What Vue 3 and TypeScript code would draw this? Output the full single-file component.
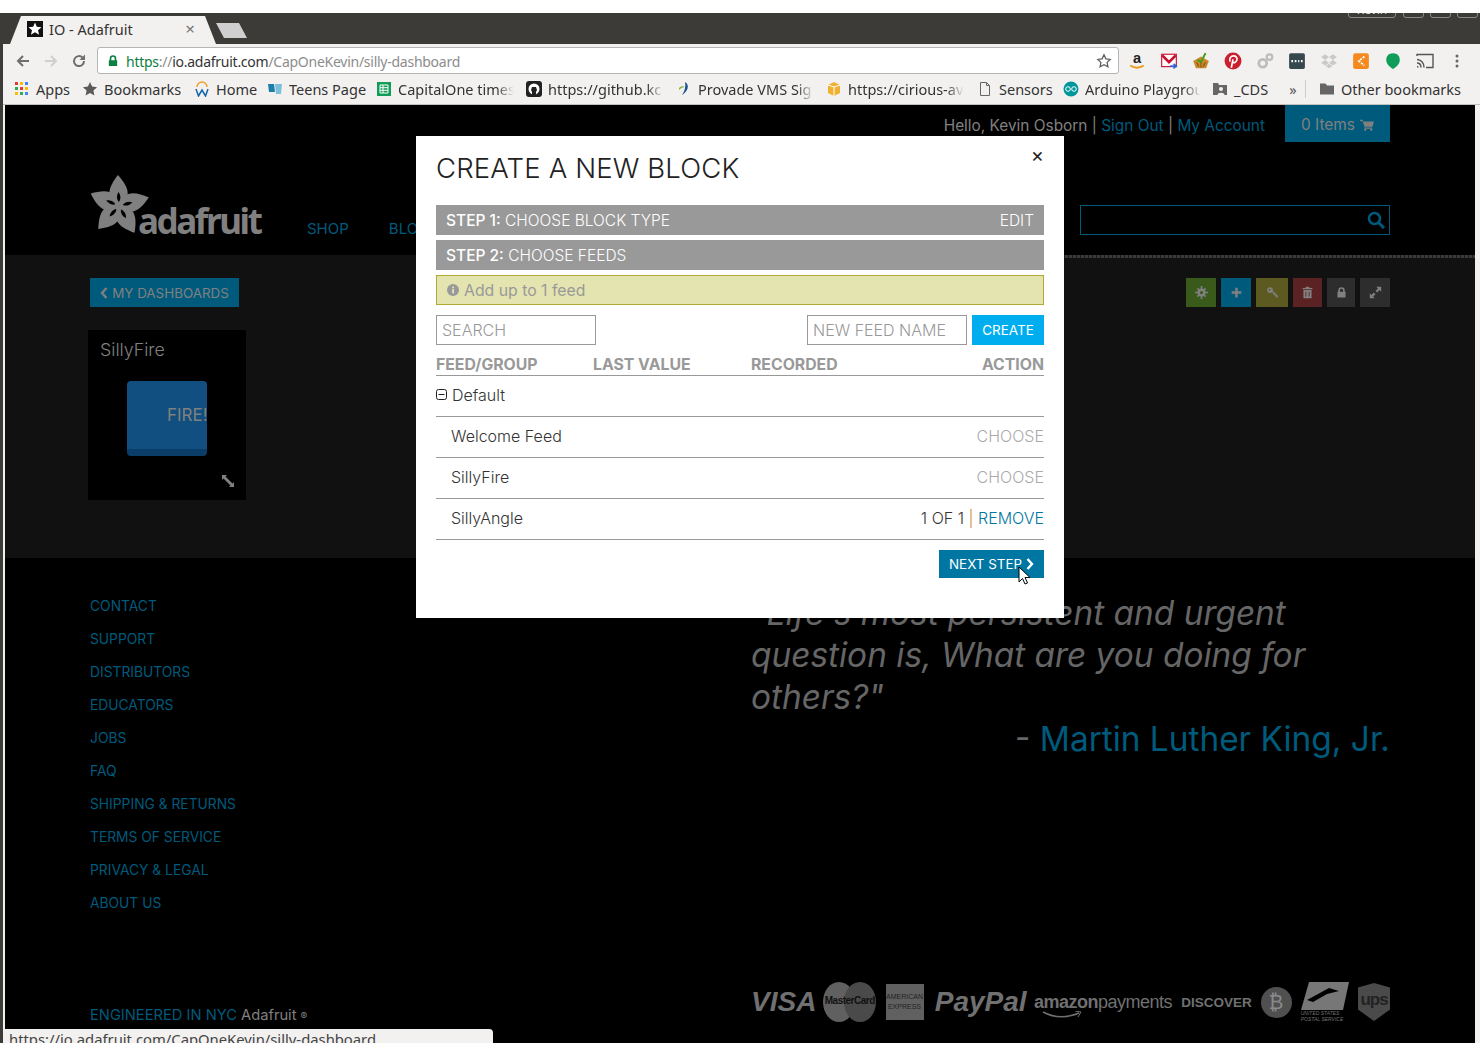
<script setup lang="ts">
const bookmarks = [
  { label: "Apps", icon: "apps", w: 68, fade: false },
  { label: "Bookmarks", icon: "star", w: 112, fade: false },
  { label: "Home", icon: "wd", w: 73, fade: false },
  { label: "Teens Page", icon: "book", w: 109, fade: false },
  { label: "CapitalOne times", icon: "sheet", w: 150, fade: true },
  { label: "https://github.kc", icon: "gh", w: 150, fade: true },
  { label: "Provade VMS Sig", icon: "prov", w: 150, fade: true },
  { label: "https://cirious-av", icon: "box", w: 151, fade: true },
  { label: "Sensors", icon: "doc", w: 86, fade: false },
  { label: "Arduino Playgrou", icon: "ard", w: 149, fade: true },
];

const extensions = ["#e8a13a", "#c8102e", "#c98a2a", "#cc1f2d", "#bdbdbd", "#37474f", "#c9c9c9", "#f5891f", "#0f9d58"];

const footerLinks = [
  "CONTACT", "SUPPORT", "DISTRIBUTORS", "EDUCATORS", "JOBS", "FAQ",
  "SHIPPING & RETURNS", "TERMS OF SERVICE", "PRIVACY & LEGAL", "ABOUT US",
];

const actions = [
  { cls: "green", icon: "M8 3a5 5 0 1 0 0 10 5 5 0 0 0 0-10zM8 6a2 2 0 1 1 0 4 2 2 0 0 1 0-4zM7 0h2v3H7zM7 13h2v3H7zM0 7h3v2H0zM13 7h3v2h-3zM2.300 3.700l1.400-1.400 1.400 1.400-1.400 1.400zM10.900 3.700l1.400-1.400 1.400 1.400-1.400 1.400zM2.300 12.300l1.400-1.400 1.400 1.400-1.400 1.400zM10.900 12.300l1.400-1.400 1.400 1.400-1.400 1.400z" },
  { cls: "blue", icon: "M6.500 2h3v4.500H14v3H9.500V14h-3V9.500H2v-3h4.500z" },
  { cls: "olive", icon: "M5 1.500a3.500 3.500 0 1 0 0 7 3.500 3.500 0 0 0 0-7zM4.500 3.500a1.200 1.200 0 1 1 0 2.400 1.200 1.200 0 0 1 0-2.400zM7.500 7l1-1 6 6v2h-2l-.7-.7V12h-1.200v-1.200H9.500z" },
  { cls: "red", icon: "M6 1h4l.5 1.500H14V4H2V2.500h3.500zM3 5h10v10H3zM5.500 7v6h1V7zM9.500 7v6h1V7z" },
  { cls: "gray", icon: "M4 7V5.500a4 4 0 0 1 8 0V7h1v7H3V7zm2 0h4V5.500a2 2 0 0 0-4 0z" },
  { cls: "gray wide", icon: "M9 1h6v6l-2-2-3 3-2-2 3-3zM6 8l2 2-3 3 2 2H1V9l2 2z" },
];

const feeds = [
  { name: "Welcome Feed", chosen: false },
  { name: "SillyFire", chosen: false },
  { name: "SillyAngle", chosen: true },
];

const petalAngles = [-2, 74, 150, 222, 294];
</script>

<template>
  <div class="shot">
    <div class="browser">
      <div class="tabstrip">
        <div class="tab">
          <span class="favicon">
            <svg viewBox="0 0 16 16" width="16" height="16"><rect width="16" height="16" fill="#111" /><path d="M8 1.500l1.800 4.300 4.700.4-3.500 3 1.100 4.600L8 11.300l-4.100 2.500L5 9.200l-3.500-3 4.700-.4z" fill="#fff" /></svg>
          </span>
          <span class="tab-title">IO - Adafruit</span>
          <span class="tab-x">×</span>
        </div>
        <div class="newtab"></div>
        <div class="winctl">
          <span class="chip">Kevin</span>
          <span class="winbtn"></span>
          <span class="winbtn"></span>
          <span class="winbtn"></span>
        </div>
      </div>

      <div class="toolbar">
        <svg class="nav-ic" viewBox="0 0 16 16" width="16" height="16"><path d="M14 8H3M8 3L3 8l5 5" fill="none" stroke="#6e6e6e" stroke-width="2" /></svg>
        <svg class="nav-ic" viewBox="0 0 16 16" width="16" height="16"><path d="M2 8h11M8 3l5 5-5 5" fill="none" stroke="#cfcfcf" stroke-width="2" /></svg>
        <svg class="nav-ic" viewBox="0 0 16 16" width="16" height="16"><path d="M13 8a5 5 0 1 1-1.500-3.500" fill="none" stroke="#6e6e6e" stroke-width="2" /><path d="M14 1.500V7H8.500z" fill="#6e6e6e" /></svg>
        <div class="omnibox">
          <svg viewBox="0 0 12 14" width="10" height="12"><path d="M2 6V4a4 4 0 0 1 8 0v2h1v7H1V6zm2 0h4V4a2 2 0 0 0-4 0z" fill="#0b8043" /></svg>
          <span class="url"><span class="scheme">https</span><span class="dim">://</span><span class="host">io.adafruit.com</span><span class="dim">/CapOneKevin/silly-dashboard</span></span>
          <svg class="omni-star" viewBox="0 0 16 16" width="16" height="16"><path d="M8 1.800l1.900 4 4.300.6-3.100 3 .8 4.400L8 11.700l-3.900 2.100.8-4.400-3.100-3 4.300-.6z" fill="none" stroke="#5f5f5f" stroke-width="1.300" /></svg>
        </div>
        <div class="exts">
          <span v-for="(c, i) in extensions" :key="i" class="ext">
            <svg viewBox="0 0 16 16" width="18" height="18">
              <template v-if="i === 0">
                <text x="8" y="10" text-anchor="middle" font-size="13" font-weight="700" font-family="Liberation Sans, sans-serif" fill="#222">a</text>
                <path d="M2 12q6 4 12 0" fill="none" stroke="#f09a1a" stroke-width="1.800" />
              </template>
              <template v-else-if="i === 1">
                <rect x="1.500" y="2" width="13" height="11" fill="#fff" stroke="#c8102e" />
                <path d="M2 3l6 6 6-6" fill="none" stroke="#c8102e" stroke-width="2.500" />
                <path d="M9 12.500h5M12 10.500l2.500 2-2.500 2" fill="none" stroke="#3367d6" stroke-width="1.500" />
              </template>
              <template v-else-if="i === 2">
                <path d="M1 8l7-4 7 4-2.500 6.500h-9z" :fill="c" />
                <path d="M5 7l3 2 4-8" fill="none" stroke="#4a9a1f" stroke-width="1.800" />
                <path d="M4 9l2 4M8 9v5M12 9l-2 4" stroke="#8a5a1a" />
              </template>
              <template v-else-if="i === 3">
                <circle cx="8" cy="8" r="7.500" :fill="c" />
                <path d="M6.500 14L8 6.500M5.500 8.500c-1.500-3 1-5 3-5s3.500 1.500 3 3.500-3 3.500-4 1.500" fill="none" stroke="#fff" stroke-width="1.500" />
              </template>
              <template v-else-if="i === 4">
                <circle cx="6" cy="10" r="3.500" fill="none" :stroke="c" stroke-width="2.500" />
                <circle cx="12" cy="4.500" r="2.500" fill="none" :stroke="c" stroke-width="2" />
              </template>
              <template v-else-if="i === 5">
                <rect x="1" y="1" width="14" height="14" rx="1.500" :fill="c" />
                <path d="M3 8h1.500M6 8h1.500M9 8h1M11.500 8H13" stroke="#fff" stroke-width="2" />
              </template>
              <template v-else-if="i === 6">
                <path d="M4.500 2L8 4.500 4.500 7 1 4.500zM11.500 2L15 4.500 11.500 7 8 4.500zM4.500 7L8 9.500 4.500 12 1 9.500zM11.500 7L15 9.500 11.500 12 8 9.500zM8 10.500l3 2-3 2-3-2z" :fill="c" />
              </template>
              <template v-else-if="i === 7">
                <rect x="1" y="1" width="14" height="14" rx="2" :fill="c" />
                <path d="M11 4L6 8l5 4" fill="none" stroke="#fff" stroke-width="1.500" stroke-dasharray="2 1" />
              </template>
              <template v-else>
                <path d="M8 1c4 0 6 2.500 6 6 0 3.500-3 6-6 8-3-2-6-4.500-6-8 0-3.500 2-6 6-6z" :fill="c" />
              </template>
            </svg>
          </span>
          <span class="ext">
            <svg viewBox="0 0 18 16" width="18" height="16"><path d="M1 3V1.500h16v13h-7M1 6.500c4 0 7 3.500 7 8M1 10c2.500 0 4 2 4 4.500M1 13.500c.8 0 1 .5 1 1" fill="none" stroke="#555" stroke-width="1.400" /></svg>
          </span>
          <span class="ext">
            <svg viewBox="0 0 4 16" width="4" height="16"><circle cx="2" cy="3" r="1.500" fill="#666" /><circle cx="2" cy="8" r="1.500" fill="#666" /><circle cx="2" cy="13" r="1.500" fill="#666" /></svg>
          </span>
        </div>
      </div>

      <div class="bookmarks">
        <div v-for="b in bookmarks" :key="b.label" class="bm" :style="{ width: b.w + 'px' }">
          <svg viewBox="0 0 16 16" width="16" height="16" class="bm-ic">
            <g v-if="b.icon === 'apps'">
              <rect x="1" y="1" width="3" height="3" fill="#e53935" /><rect x="6" y="1" width="3" height="3" fill="#fbbc05" /><rect x="11" y="1" width="3" height="3" fill="#4285f4" />
              <rect x="1" y="6" width="3" height="3" fill="#34a853" /><rect x="6" y="6" width="3" height="3" fill="#e53935" /><rect x="11" y="6" width="3" height="3" fill="#fbbc05" />
              <rect x="1" y="11" width="3" height="3" fill="#fbbc05" /><rect x="6" y="11" width="3" height="3" fill="#34a853" /><rect x="11" y="11" width="3" height="3" fill="#4285f4" />
            </g>
            <path v-else-if="b.icon === 'star'" d="M8 1l2.100 4.600 5 .6-3.700 3.300 1 4.900L8 12l-4.400 2.400 1-4.900L.9 6.200l5-.6z" fill="#5a5a5a" />
            <g v-else-if="b.icon === 'wd'">
              <path d="M3 6a5 5 0 0 1 10 0" fill="none" stroke="#f0a030" stroke-width="1.500" />
              <path d="M2 8l2.500 7L8 9l3.500 6L14 8" fill="none" stroke="#1166aa" stroke-width="1.500" />
            </g>
            <g v-else-if="b.icon === 'book'">
              <path d="M1 3h6l1 8H2z" fill="#1b7fa8" /><path d="M8 3h7l-1 10H9z" fill="#7cc0da" />
            </g>
            <g v-else-if="b.icon === 'sheet'">
              <rect x="1" y="1" width="14" height="14" fill="#0f9d58" />
              <path d="M4 4h8v8H4zM4 6.700h8M4 9.300h8M7 4v8" fill="none" stroke="#fff" />
            </g>
            <g v-else-if="b.icon === 'gh'">
              <rect x="0" y="0" width="16" height="16" rx="3" fill="#222" />
              <circle cx="8" cy="8" r="5.500" fill="#fff" />
              <path d="M6 14v-3l-1-2 1-3h4l1 3-1 2v3z" fill="#222" />
            </g>
            <g v-else-if="b.icon === 'prov'">
              <path d="M9 1c5 3 3 9-3 13 3-4 4-9 3-13z" fill="#1a4f8f" />
              <path d="M3 7c2-2 4-2 6-1-2 0-4 1-6 3z" fill="#8cb33a" />
            </g>
            <g v-else-if="b.icon === 'box'">
              <path d="M8 1l6 3v8l-6 3-6-3V4z" fill="#f0b132" /><path d="M8 6v9" stroke="#fff" /><path d="M2 4l6 2 6-2" fill="none" stroke="#fff" />
            </g>
            <path v-else-if="b.icon === 'doc'" d="M3.500 1.500h6l3 3v10h-9zM9.500 1.500v3h3" fill="none" stroke="#666" />
            <g v-else>
              <circle cx="8" cy="8" r="7.500" fill="#00979c" />
              <circle cx="5" cy="8" r="2.300" fill="none" stroke="#fff" /><circle cx="11" cy="8" r="2.300" fill="none" stroke="#fff" />
            </g>
          </svg>
          <span class="bm-text" :class="{ fade: b.fade }">{{ b.label }}</span>
        </div>
        <div class="bm cds">
          <svg viewBox="0 0 16 16" width="16" height="16" class="bm-ic"><path d="M1 2h5l1 2h8v10H1z" fill="#666" /><circle cx="9" cy="8" r="2" fill="#f2f1f0" /><path d="M5.500 14c0-3 7-3 7 0z" fill="#f2f1f0" /></svg>
          <span>_CDS</span>
        </div>
        <span class="more">»</span>
        <span class="bm-sep"></span>
        <div class="bm other">
          <svg viewBox="0 0 16 16" width="16" height="16" class="bm-ic"><path d="M1 2.500h5.500l1.500 2h7v9H1z" fill="#666" /></svg>
          <span>Other bookmarks</span>
        </div>
      </div>

      <div class="page">
        <header class="site-head">
          <div class="userline">
            <span class="hello">Hello, Kevin Osborn | <a>Sign Out</a> | <a>My Account</a></span>
            <span class="cart">0 Items
              <svg viewBox="0 0 16 14" width="14" height="12"><path d="M0 1h3l.5 2H16l-1.500 6H5L3 2.500H0zM5 10h9v1.300H5z" fill="#808080" /><circle cx="6" cy="12.600" r="1.300" fill="#808080" /><circle cx="13" cy="12.600" r="1.300" fill="#808080" /></svg>
            </span>
          </div>
          <div class="logoline">
            <div class="logo">
              <svg viewBox="0 0 60 60" width="60" height="60">
                <path v-for="a in petalAngles" :key="a" d="M0 0C-15 -9 -9 -20 0 -31C9 -20 15 -9 0 0z" fill="#808080" :transform="`translate(29 31) rotate(${a})`" />
                <path v-for="a in petalAngles" :key="'s' + a" d="M0 -4C-2.500 -7 -2 -11 0 -14C2 -11 2.500 -7 0 -4z" fill="#000" :transform="`translate(29 31) rotate(${a})`" />
              </svg>
              <span class="wordmark">adafruit</span>
            </div>
            <nav class="mainnav"><a>SHOP</a><a>BLOG</a></nav>
            <div class="sitesearch">
              <svg viewBox="0 0 18 18" width="18" height="18"><circle cx="7.500" cy="7.500" r="5.500" fill="none" stroke="#005a7c" stroke-width="2.600" /><path d="M11.500 11.500L17 17" stroke="#005a7c" stroke-width="3" /></svg>
            </div>
          </div>
        </header>

        <main class="dash">
          <div class="dash-top">
            <button class="back">
              <svg viewBox="0 0 8 12" width="8" height="12"><path d="M6.500 1L2 6l4.500 5" fill="none" stroke="#808080" stroke-width="2.400" /></svg>
              MY DASHBOARDS
            </button>
            <div class="actions">
              <span v-for="a in actions" :key="a.cls" class="act" :class="a.cls">
                <svg viewBox="0 0 16 16" width="13" height="13"><path :d="a.icon" fill="#808080" fill-rule="evenodd" /></svg>
              </span>
            </div>
          </div>
          <div class="block">
            <div class="block-title">SillyFire</div>
            <div class="firebtn"><span>FIRE!</span></div>
            <svg class="resize" viewBox="0 0 14 14" width="14" height="14"><path d="M1 1h5L4.500 2.500l7 7L13 8v5H8l1.500-1.500-7-7L1 6z" fill="#808080" /></svg>
          </div>
        </main>

        <footer class="site-foot">
          <div class="foot-cols">
            <ul class="foot-links">
              <li v-for="l in footerLinks" :key="l">{{ l }}</li>
            </ul>
            <div class="quote">
              <p class="q-text">"Life's most persistent and urgent question is, What are you doing for others?"</p>
              <p class="q-by">- <a>Martin Luther King, Jr.</a></p>
            </div>
          </div>
          <div class="foot-bottom">
            <div class="eng"><span>ENGINEERED IN NYC</span> Adafruit <small>®</small></div>
            <div class="pay">
              <span class="p-visa">VISA</span>
              <span class="p-mc"><i></i><i></i><b>MasterCard</b></span>
              <span class="p-amex">AMERICAN<br />EXPRESS</span>
              <span class="p-paypal">PayPal</span>
              <span class="p-amazon"><b>amazon</b>payments
                <svg viewBox="0 0 40 8" width="40" height="8"><path d="M1 1q17 9 36 1" fill="none" stroke="#707070" stroke-width="1.500" /><path d="M33 0l6 1-3 5" fill="none" stroke="#707070" /></svg>
              </span>
              <span class="p-disc">DISCOVER</span>
              <span class="p-btc">₿</span>
              <span class="p-usps">
                <svg viewBox="0 0 48 28" width="48" height="28"><path d="M8 0h40l-6 28H0z" fill="#777" /><path d="M6 18L28 6l10 3-12 3-14 8z" fill="#000" /></svg>
                <em>UNITED STATES<br />POSTAL SERVICE</em>
              </span>
              <span class="p-ups">ups</span>
            </div>
          </div>
        </footer>

        <div class="modal">
          <span class="modal-x">×</span>
          <h2>CREATE A NEW BLOCK</h2>
          <div class="step"><span><b>STEP 1:</b> CHOOSE BLOCK TYPE</span><span>EDIT</span></div>
          <div class="step"><span><b>STEP 2:</b> CHOOSE FEEDS</span></div>
          <div class="alert">
            <svg viewBox="0 0 14 14" width="12" height="12"><circle cx="7" cy="7" r="7" fill="#999" /><rect x="6" y="6" width="2.200" height="5" fill="#e4e4b0" /><rect x="6" y="3" width="2.200" height="2" fill="#e4e4b0" /></svg>
            Add up to 1 feed
          </div>
          <div class="filters">
            <div class="field search">SEARCH</div>
            <div class="field newfeed">NEW FEED NAME</div>
            <button class="create">CREATE</button>
          </div>
          <div class="thead">
            <span class="c1">FEED/GROUP</span><span class="c2">LAST VALUE</span><span class="c3">RECORDED</span><span class="c4">ACTION</span>
          </div>
          <div class="row group">
            <svg viewBox="0 0 12 12" width="12" height="12"><rect x=".5" y=".5" width="10" height="10" rx="2" fill="none" stroke="#222" /><path d="M2.500 5.500h6" stroke="#222" /></svg>
            Default
          </div>
          <div v-for="f in feeds" :key="f.name" class="row feed">
            <span>{{ f.name }}</span>
            <span v-if="f.chosen" class="count">1 OF 1 <i>|</i> <a>REMOVE</a></span>
            <span v-else class="choose">CHOOSE</span>
          </div>
          <div class="modal-foot">
            <button class="next">NEXT STEP
              <svg viewBox="0 0 8 12" width="8" height="12"><path d="M1.500 1L6 6l-4.500 5" fill="none" stroke="#fff" stroke-width="2.400" /></svg>
            </button>
          </div>
        </div>

        <svg class="cursor" viewBox="0 0 13 20" width="13" height="20"><path d="M1 1v15l3.500-3.500L7 18l2.500-1-2.500-5.500h5z" fill="#fff" stroke="#000" /></svg>

        <div class="status">https://io.adafruit.com/CapOneKevin/silly-dashboard</div>
      </div>
    </div>
  </div>
</template>

<style>
html,
body {
  margin: 0;
  background: #fff;
}
</style>

<style scoped>
.shot {
  width: 1480px;
  height: 1056px;
  overflow: hidden;
  background: #fff;
  padding-top: 13px;
  box-sizing: border-box;
}

.browser {
  height: 1030px;
  box-sizing: border-box;
  border-left: 3px solid #3c3b37;
  display: flex;
  flex-direction: column;
  overflow: hidden;
  background: #f2f1f0;
  font-family: "Noto Sans", Roboto, sans-serif;
  color: #333;
}

/* tab strip */
.tabstrip {
  height: 31px;
  flex: none;
  display: flex;
  align-items: flex-end;
  background: #3c3b37;
  padding-left: 7px;
  position: relative;
  overflow: hidden;
}

.tab {
  width: 206px;
  height: 28px;
  box-sizing: border-box;
  background: #f2f1f0;
  clip-path: polygon(0 100%, 11px 0, 195px 0, 100% 100%);
  display: flex;
  align-items: center;
  padding: 0 21px 3px 17px;
  font-size: 14.500px;
}

.favicon {
  width: 16px;
  height: 16px;
  margin-right: 6px;
  display: block;
}

.favicon svg {
  display: block;
}

.tab-title {
  flex: 1;
}

.tab-x {
  color: #777;
  font-size: 17px;
  line-height: 1;
}

.newtab {
  width: 31px;
  height: 15px;
  margin: 0 0 6px 0;
  background: #cfcfcf;
  clip-path: polygon(0 0, 23px 0, 100% 100%, 8px 100%);
}

.winctl {
  margin-left: auto;
  align-self: flex-start;
  margin-top: -12px;
  display: flex;
  gap: 6px;
  padding-right: 2px;
}

.chip {
  width: 48px;
  height: 17px;
  box-sizing: border-box;
  border: 1px solid #8a8a85;
  border-radius: 3px;
  color: #ddd;
  font-size: 12px;
  text-align: center;
  line-height: 15px;
  margin-right: 1px;
}

.winbtn {
  width: 21px;
  height: 17px;
  box-sizing: border-box;
  border: 1px solid #8a8a85;
  border-radius: 3px;
}

/* toolbar */
.toolbar {
  height: 33px;
  flex: none;
  display: flex;
  align-items: center;
  padding-left: 12px;
  gap: 12px;
}

.nav-ic {
  flex: none;
}

.omnibox {
  width: 1022px;
  height: 27px;
  box-sizing: border-box;
  margin-left: -2px;
  background: #fff;
  border: 1px solid #b5b5b5;
  border-radius: 3px;
  display: flex;
  align-items: center;
  padding: 0 6px 0 10px;
  font-size: 14px;
}

.url {
  margin-left: 8px;
  padding-top: 1px;
  flex: 1;
  letter-spacing: -0.26px;
}

.scheme {
  color: #0b8043;
}

.dim {
  color: #8c8c8c;
}

.host {
  color: #333;
}

.omni-star {
  flex: none;
}

.exts {
  display: flex;
  margin-left: -10px;
}

.ext {
  width: 32px;
  height: 22px;
  display: flex;
  align-items: center;
  justify-content: center;
}

/* bookmarks */
.bookmarks {
  height: 28px;
  flex: none;
  display: flex;
  align-items: center;
  padding: 0 0 3px 11px;
  font-size: 14.500px;
  border-bottom: 1px solid #c0c0c0;
  box-sizing: border-box;
  white-space: nowrap;
}

.bm {
  display: flex;
  align-items: center;
  flex: none;
  overflow: hidden;
}

.bm-ic {
  flex: none;
  margin-right: 6px;
}

.bm-text {
  overflow: hidden;
}

.bm-text.fade {
  width: 116px;
  flex: none;
  -webkit-mask-image: linear-gradient(to right, #000 85%, transparent);
  mask-image: linear-gradient(to right, #000 85%, transparent);
}

.cds {
  width: 76px;
}

.more {
  color: #555;
  width: 24px;
  text-align: center;
  margin-left: -7px;
}

.bm-sep {
  width: 1px;
  height: 18px;
  background: #ccc;
  margin: 0 13px 0 0;
}

/* page */
.page {
  flex: 1;
  position: relative;
  overflow: hidden;
  margin: 0 5px 0 2px;
  background: #000;
  font-family: Inter, "Liberation Sans", sans-serif;
  color: #808080;
}

.site-head {
  height: 150px;
  padding: 0 85px;
  box-sizing: border-box;
}

.userline {
  display: flex;
  justify-content: flex-end;
  align-items: flex-start;
  font-size: 15.400px;
}

.hello {
  margin-top: 11px;
  margin-right: 20px;
}

.hello a {
  color: #005a7c;
}

.cart {
  width: 105px;
  height: 37px;
  box-sizing: border-box;
  padding-top: 2px;
  background: #005a7c;
  display: flex;
  align-items: center;
  justify-content: center;
  gap: 5px;
  font-size: 15.400px;
}

.logoline {
  display: flex;
  align-items: flex-end;
  margin-top: 33px;
}

.logo {
  width: 217px;
  display: flex;
  align-items: flex-end;
  position: relative;
}

.wordmark {
  font-family: "Noto Sans", sans-serif;
  font-weight: 700;
  font-size: 35px;
  line-height: 30px;
  letter-spacing: -2.4px;
  margin-left: -12px;
  margin-bottom: -1px;
  color: #808080;
}

.mainnav {
  display: flex;
  gap: 40px;
  font-size: 15px;
  color: #005a7c;
  margin-bottom: -3px;
}

.sitesearch {
  margin-left: auto;
  width: 310px;
  height: 30px;
  box-sizing: border-box;
  border: 1px solid #005a7c;
  display: flex;
  align-items: center;
  justify-content: flex-end;
  padding-right: 4px;
}

.dash {
  position: relative;
  height: 303px;
  background: #111;
  box-sizing: border-box;
  padding: 23px 85px 0;
}

/* dashed rule that shows to the right of the modal */
.dash::before {
  content: "";
  position: absolute;
  left: 1000px;
  right: 0;
  top: 0;
  height: 3px;
  background: repeating-linear-gradient(to right, #3a3a3a 0 3px, #1a1a1a 3px 4px);
}

.dash-top {
  display: flex;
  justify-content: space-between;
  align-items: flex-start;
}

.back {
  width: 149px;
  height: 29px;
  border: 0;
  padding: 0;
  background: #005a7c;
  color: #808080;
  font-family: inherit;
  font-size: 13.400px;
  display: flex;
  align-items: center;
  justify-content: center;
  gap: 4px;
}

.actions {
  display: flex;
  gap: 5px;
}

.act {
  width: 30px;
  height: 29px;
  display: flex;
  align-items: center;
  justify-content: center;
}

.act.green {
  background: #3a5a1c;
}

.act.blue {
  background: #005a7c;
}

.act.olive {
  background: #5c5a20;
  width: 32px;
}

.act.red {
  background: #5a2222;
  width: 29px;
}

.act.gray {
  background: #2d2d2d;
  width: 28px;
}

.act.gray.wide {
  width: 30px;
}

.block {
  position: relative;
  width: 158px;
  height: 170px;
  margin: 23px 0 0 -2px;
  background: #000;
  box-sizing: border-box;
  padding: 10px 12px;
}

.block-title {
  font-size: 17.800px;
  line-height: 20px;
  font-weight: 300;
}

.firebtn {
  width: 80px;
  height: 75px;
  margin: 21px 0 0 27px;
  box-sizing: border-box;
  background: #104f7f;
  border-bottom: 7px solid #0a3d68;
  border-radius: 4px;
  overflow: hidden;
  padding: 24px 0 0 40px;
  font-size: 17px;
  line-height: 20px;
  white-space: nowrap;
}

.resize {
  position: absolute;
  right: 11px;
  bottom: 12px;
}

.site-foot {
  height: 485px;
  box-sizing: border-box;
  padding: 0 85px;
  position: relative;
}

.foot-cols {
  display: flex;
}

.foot-links {
  list-style: none;
  margin: 0;
  padding: 32px 0 0;
  width: 661px;
  flex: none;
  color: #005a7c;
  font-size: 13.800px;
}

.foot-links li {
  height: 33px;
  line-height: 33px;
}

.quote {
  flex: 1;
  padding-top: 34px;
}

.q-text {
  margin: 0;
  font-size: 33.400px;
  line-height: 42px;
  font-style: italic;
  font-weight: 400;
  color: #666;
}

.q-by {
  margin: 0;
  text-align: right;
  font-size: 33.400px;
  line-height: 42px;
  color: #666;
}

.q-by a {
  color: #005a7c;
}

.foot-bottom {
  position: absolute;
  left: 85px;
  right: 85px;
  top: 424px;
  display: flex;
  align-items: flex-end;
}

.eng {
  width: 661px;
  flex: none;
  font-size: 14.700px;
  margin-bottom: 18px;
}

.eng span {
  color: #005a7c;
}

.eng small {
  font-size: 10px;
}

.pay {
  flex: 1;
  display: flex;
  align-items: center;
  justify-content: space-between;
  color: #707070;
  height: 40px;
  margin-bottom: 20px;
  font-family: "Liberation Sans", sans-serif;
}

.p-visa {
  width: 63px;
  font-size: 28px;
  font-weight: 700;
  font-style: italic;
}

.p-mc {
  width: 53px;
  height: 40px;
  position: relative;
  display: block;
}

.p-mc i {
  position: absolute;
  top: 0;
  left: 0;
  width: 32px;
  height: 40px;
  border-radius: 50%;
  background: #606060;
}

.p-mc i + i {
  left: 21px;
  background: #4a4a4a;
}

.p-mc b {
  position: absolute;
  left: 0;
  right: 0;
  top: 13px;
  font-size: 10px;
  letter-spacing: -0.5px;
  color: #111;
  text-align: center;
}

.p-amex {
  width: 38px;
  height: 36px;
  box-sizing: border-box;
  background: #606060;
  color: #222;
  font-size: 7px;
  line-height: 10px;
  padding-top: 8px;
  text-align: center;
}

.p-paypal {
  width: 90px;
  margin-left: 2px;
  font-size: 28px;
  font-weight: 700;
  font-style: italic;
}

.p-amazon {
  width: 138px;
  font-size: 18px;
  letter-spacing: -0.5px;
  white-space: nowrap;
  position: relative;
}

.p-amazon svg {
  position: absolute;
  left: 8px;
  top: 19px;
}

.p-disc {
  width: 70px;
  font-size: 13.500px;
  font-weight: 700;
  white-space: nowrap;
}

.p-btc {
  width: 31px;
  height: 31px;
  border-radius: 50%;
  background: #505050;
  color: #8a8a8a;
  font-size: 20px;
  text-align: center;
  line-height: 31px;
  font-family: "DejaVu Sans", sans-serif;
}

.p-usps {
  width: 48px;
  display: flex;
  flex-direction: column;
}

.p-usps svg {
  display: block;
}

.p-usps em {
  font-size: 5px;
  line-height: 6px;
}

.p-ups {
  width: 32px;
  height: 38px;
  box-sizing: border-box;
  background: #4a4a4a;
  clip-path: polygon(0 12%, 50% 0, 100% 12%, 100% 70%, 50% 100%, 0 70%);
  color: #222;
  font-size: 17px;
  letter-spacing: -1px;
  font-weight: 700;
  text-align: center;
  line-height: 34px;
}

/* modal */
.modal {
  position: absolute;
  left: 411px;
  top: 31px;
  width: 648px;
  height: 482px;
  box-sizing: border-box;
  padding: 0 20px;
  background: #fff;
  color: #333;
  font-weight: 300;
}

.modal h2 {
  margin: 0;
  height: 69px;
  padding-top: 14px;
  box-sizing: border-box;
  font-size: 27.500px;
  line-height: 36px;
  font-weight: 300;
  letter-spacing: 0.15px;
  color: #222;
}

.modal-x {
  position: absolute;
  right: 20px;
  top: 9px;
  font-size: 20px;
  line-height: 20px;
  font-weight: 400;
  color: #222;
}

.step {
  height: 30px;
  margin-bottom: 5px;
  padding: 0 10px;
  background: #999;
  color: #fff;
  display: flex;
  justify-content: space-between;
  align-items: center;
  font-size: 15.500px;
}

.step b {
  font-weight: 500;
}

.alert {
  height: 30px;
  box-sizing: border-box;
  border: 1px solid #b0aa30;
  background: #e4e4b0;
  color: #999;
  display: flex;
  align-items: center;
  gap: 5px;
  padding-left: 10px;
  font-size: 15.800px;
  font-weight: 400;
}

.filters {
  display: flex;
  margin-top: 10px;
  gap: 5px;
}

.field {
  width: 160px;
  height: 30px;
  box-sizing: border-box;
  border: 1px solid #999;
  color: #999;
  font-size: 16px;
  line-height: 28px;
  padding-left: 5px;
}

.search {
  margin-right: auto;
}

.create {
  width: 72px;
  height: 30px;
  border: 0;
  padding: 0;
  background: #00aeef;
  color: #fff;
  font-family: inherit;
  font-size: 13.500px;
}

.thead {
  display: flex;
  height: 31px;
  box-sizing: border-box;
  padding-top: 11px;
  border-bottom: 1px solid #999;
  color: #999;
  font-size: 15.800px;
  line-height: 18px;
  font-weight: 700;
  white-space: nowrap;
}

.c1 {
  width: 157px;
}

.c2 {
  width: 158px;
}

.c3 {
  flex: 1;
}

.row {
  height: 41px;
  box-sizing: border-box;
  padding-bottom: 2px;
  border-bottom: 1px solid #999;
  display: flex;
  align-items: center;
  font-size: 16px;
}

.group {
  gap: 4px;
}

.feed {
  justify-content: space-between;
  padding-left: 15px;
}

.choose {
  color: #aaa;
}

.count i {
  font-style: normal;
  color: #c98a2a;
}

.count a {
  color: #0076a3;
}

.modal-foot {
  display: flex;
  justify-content: flex-end;
  margin-top: 10px;
}

.next {
  width: 105px;
  height: 28px;
  border: 0;
  padding: 0;
  background: #0076a3;
  color: #fff;
  font-family: inherit;
  font-size: 13.400px;
  display: flex;
  align-items: center;
  justify-content: center;
  gap: 4px;
}

.cursor {
  position: absolute;
  left: 1013px;
  top: 461px;
}

.status {
  position: absolute;
  left: 0;
  bottom: -2px;
  width: 488px;
  height: 16px;
  box-sizing: border-box;
  padding-left: 4px;
  background: #f2f1f0;
  border-radius: 0 4px 0 0;
  font-family: "Noto Sans", sans-serif;
  font-size: 14.800px;
  line-height: 20px;
  color: #444;
  overflow: hidden;
}
</style>
